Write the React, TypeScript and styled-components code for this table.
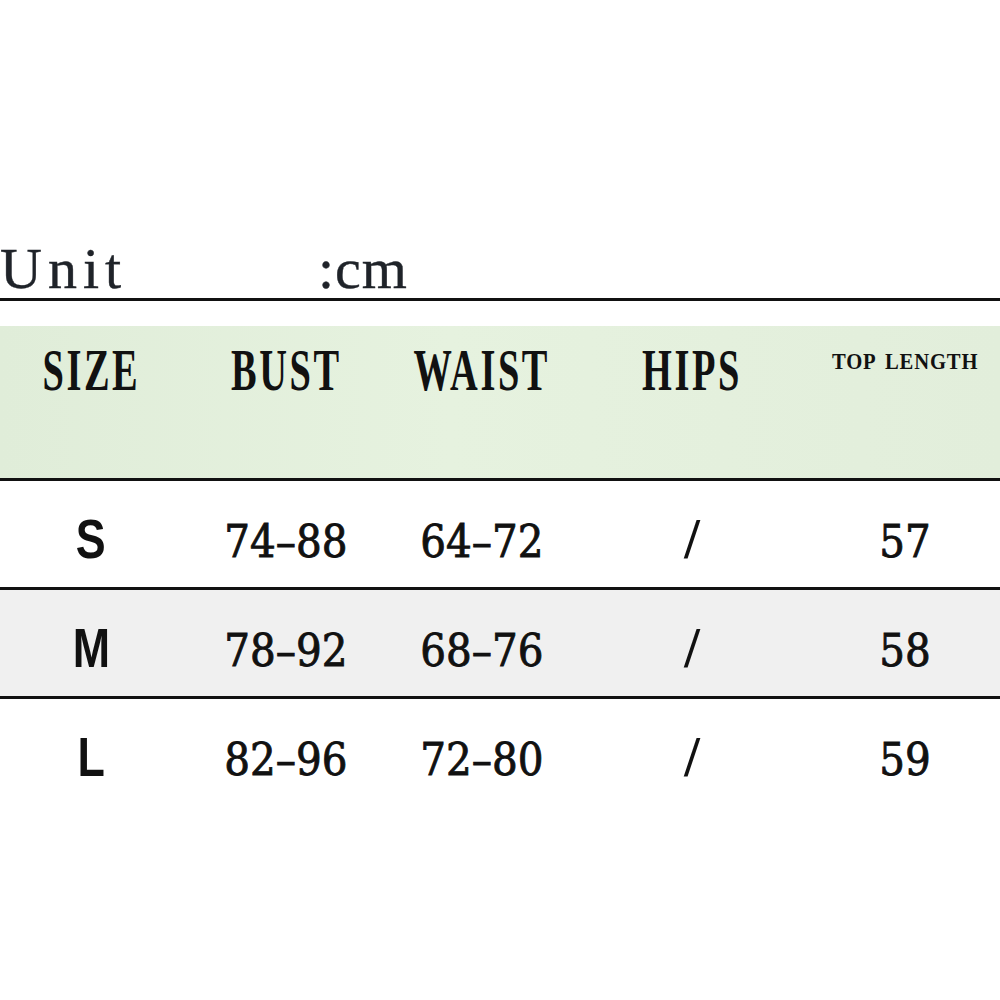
import React from "react";
import styled, { createGlobalStyle } from "styled-components";

const Global = createGlobalStyle`
  html, body { margin: 0; padding: 0; background: #ffffff; }
  #root { width: 1000px; height: 1000px; }
`;

const Page = styled.div`
  width: 1000px;
  height: 1000px;
  padding-top: 230px;
  box-sizing: border-box;
  background: #ffffff;
`;

const UnitRow = styled.div`
  height: 68px;
  display: flex;
  align-items: flex-end;
  border-bottom: 3px solid #111;
  font-family: "Liberation Serif", serif;
  font-size: 58px;
  line-height: 1;
  color: #1f2329;
  letter-spacing: 6px;
  -webkit-text-stroke: 0.4px #1f2329;
`;

const UnitLabel = styled.span`
  width: 318px;
`;

const UnitValue = styled.span`
  letter-spacing: 1px;
`;

const Table = styled.div`
  margin-top: 25px;
`;

const cols = "182px 208px 184px 236px 1fr";

const HeaderRow = styled.div`
  display: grid;
  grid-template-columns: ${cols};
  height: 152px;
  background: linear-gradient(90deg, #e0edd9 0%, #e6f2df 45%, #e2eedb 100%);
`;

const HeaderCell = styled.div<{ $top: number }>`
  display: flex;
  justify-content: center;
  align-items: flex-start;
  padding-top: ${(p) => p.$top}px;
`;

const HeaderText = styled.span`
  display: inline-block;
  font-family: "Liberation Serif", serif;
  font-weight: bold;
  font-size: 60px;
  line-height: 1;
  color: #111;
  letter-spacing: 4px;
  transform: scaleX(0.64);
  white-space: nowrap;
`;

const SmallHeaderText = styled.span`
  display: inline-block;
  font-family: "Liberation Serif", serif;
  font-weight: bold;
  font-size: 24px;
  line-height: 1;
  color: #111;
  letter-spacing: 1px;
  word-spacing: 4px;
  transform: scaleX(0.86);
  white-space: nowrap;
`;

const BodyRow = styled.div<{ $shade: boolean }>`
  display: grid;
  grid-template-columns: ${cols};
  height: 106px;
  border-top: 3px solid #111;
  background: ${(p) => (p.$shade ? "#f0f0f0" : "#ffffff")};
`;

const Cell = styled.div`
  display: flex;
  justify-content: center;
  align-items: center;
  padding-top: 10px;
  box-sizing: border-box;
`;

const SizeLetter = styled.span`
  display: inline-block;
  font-family: "Liberation Sans", Arial, sans-serif;
  font-weight: bold;
  font-size: 56px;
  line-height: 1;
  color: #111;
  transform: scaleX(0.8);
`;

const Num = styled.span`
  display: inline-block;
  margin-top: 6px;
  font-family: "DejaVu Serif", serif;
  font-size: 44px;
  line-height: 1;
  color: #111;
  -webkit-text-stroke: 0.9px #111;
  transform: scaleX(0.92);
  white-space: nowrap;
`;

const Slash = styled.span`
  display: inline-block;
  font-family: "Liberation Serif", serif;
  font-weight: bold;
  font-size: 56px;
  line-height: 1;
  color: #111;
`;

const rows = [
  { size: "S", bust: "74–88", waist: "64–72", hips: "/", top: "57" },
  { size: "M", bust: "78–92", waist: "68–76", hips: "/", top: "58" },
  { size: "L", bust: "82–96", waist: "72–80", hips: "/", top: "59" },
];

export default function App() {
  return (
    <Page>
      <Global />
      <UnitRow>
        <UnitLabel>Unit</UnitLabel>
        <UnitValue>:cm</UnitValue>
      </UnitRow>
      <Table>
        <HeaderRow>
          <HeaderCell $top={14}><HeaderText>SIZE</HeaderText></HeaderCell>
          <HeaderCell $top={14}><HeaderText>BUST</HeaderText></HeaderCell>
          <HeaderCell $top={14}><HeaderText>WAIST</HeaderText></HeaderCell>
          <HeaderCell $top={14}><HeaderText>HIPS</HeaderText></HeaderCell>
          <HeaderCell $top={23}><SmallHeaderText>TOP LENGTH</SmallHeaderText></HeaderCell>
        </HeaderRow>
        {rows.map((r, i) => (
          <BodyRow key={r.size} $shade={i === 1}>
            <Cell><SizeLetter>{r.size}</SizeLetter></Cell>
            <Cell><Num>{r.bust}</Num></Cell>
            <Cell><Num>{r.waist}</Num></Cell>
            <Cell><Slash>{r.hips}</Slash></Cell>
            <Cell><Num>{r.top}</Num></Cell>
          </BodyRow>
        ))}
      </Table>
    </Page>
  );
}
